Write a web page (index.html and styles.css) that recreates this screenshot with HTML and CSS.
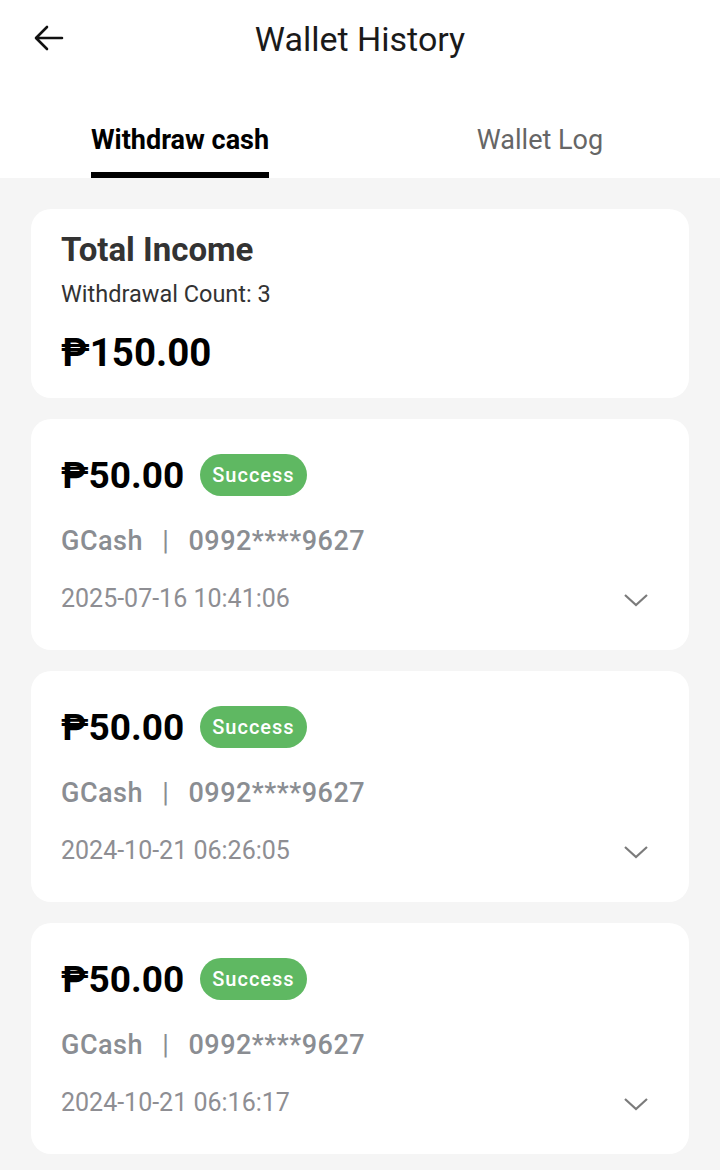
FILE: index.html
```html
<!DOCTYPE html>
<html lang="en">
<head>
    <meta charset="UTF-8">
    <meta name="viewport" content="width=device-width, initial-scale=1.0">
    <title>Wallet History</title>
    <link rel="stylesheet" href="styles.css">
</head>
<body>
    <div class="header">
        <div class="topbar">
            <span class="back">
                <svg width="30" height="26" viewBox="0 0 30 26"><path d="M28 13H3M13 2L2 13l11 11" fill="none" stroke="#111" stroke-width="2.6" stroke-linecap="round" stroke-linejoin="round"/></svg>
            </span>
            <h1>Wallet History</h1>
        </div>
        <div class="tabs">
            <div class="tab active"><span>Withdraw cash</span></div>
            <div class="tab"><span>Wallet Log</span></div>
        </div>
    </div>

    <div class="content">
        <div class="card summary">
            <h2>Total Income</h2>
            <p class="count">Withdrawal Count: 3</p>
            <p class="total">₱150.00</p>
        </div>

        <div class="card record">
            <div class="amount-row">
                <span class="amount">₱50.00</span>
                <span class="badge">Success</span>
            </div>
            <p class="account">GCash <span class="sep">|</span> 0992****9627</p>
            <div class="date-row">
                <span class="date">2025-07-16 10:41:06</span>
                <svg class="chev" width="26" height="16" viewBox="0 0 26 16"><path d="M2 3l11 10L24 3" fill="none" stroke="#7b7b7b" stroke-width="2.2"/></svg>
            </div>
        </div>

        <div class="card record">
            <div class="amount-row">
                <span class="amount">₱50.00</span>
                <span class="badge">Success</span>
            </div>
            <p class="account">GCash <span class="sep">|</span> 0992****9627</p>
            <div class="date-row">
                <span class="date">2024-10-21 06:26:05</span>
                <svg class="chev" width="26" height="16" viewBox="0 0 26 16"><path d="M2 3l11 10L24 3" fill="none" stroke="#7b7b7b" stroke-width="2.2"/></svg>
            </div>
        </div>

        <div class="card record">
            <div class="amount-row">
                <span class="amount">₱50.00</span>
                <span class="badge">Success</span>
            </div>
            <p class="account">GCash <span class="sep">|</span> 0992****9627</p>
            <div class="date-row">
                <span class="date">2024-10-21 06:16:17</span>
                <svg class="chev" width="26" height="16" viewBox="0 0 26 16"><path d="M2 3l11 10L24 3" fill="none" stroke="#7b7b7b" stroke-width="2.2"/></svg>
            </div>
        </div>
    </div>
</body>
</html>
```

FILE: styles.css
```css
body {
    font-family: Roboto, "Liberation Sans", sans-serif;
    margin: 0;
    background-color: #f5f5f5;
    color: #111;
}
.header {
    background: white;
}
.topbar {
    height: 80px;
    display: flex;
    align-items: center;
    justify-content: center;
    position: relative;
}
.back {
    position: absolute;
    left: 34px;
    top: 25px;
    display: flex;
}
h1 {
    margin: 0;
    font-size: 34px;
    font-weight: 400;
    color: #1a1a1a;
    padding-bottom: 2px;
}
.tabs {
    display: flex;
    height: 98px;
}
.tab {
    flex: 1;
    display: flex;
    justify-content: center;
}
.tab span {
    font-size: 27px;
    color: #666;
    padding-top: 44px;
    height: 48px;
}
.tab.active span {
    color: #000;
    font-weight: 700;
    border-bottom: 6px solid #000;
}
.content {
    padding: 31px 31px 14px;
    display: flex;
    flex-direction: column;
    gap: 21px;
}
.card {
    background: white;
    border-radius: 20px;
    padding: 0 30px;
}
.summary {
    height: 189px;
    padding-top: 21px;
    box-sizing: border-box;
}
.summary h2 {
    margin: 0;
    font-size: 33px;
    font-weight: 700;
    color: #333;
    line-height: 40px;
}
.count {
    margin: 9px 0 0;
    font-size: 23.5px;
    color: #333;
    line-height: 30px;
}
.total {
    margin: 20px 0 0;
    font-size: 38.5px;
    font-weight: 700;
    color: #000;
    line-height: 48px;
}
.record {
    height: 231px;
    padding-top: 35px;
    box-sizing: border-box;
}
.amount-row {
    display: flex;
    align-items: center;
    gap: 16px;
    height: 42px;
}
.amount {
    font-size: 37px;
    font-weight: 700;
    color: #000;
}
.badge {
    background: #5fb862;
    color: white;
    font-size: 20px;
    font-weight: 500;
    letter-spacing: 1px;
    height: 42px;
    line-height: 42px;
    padding: 0 12px;
    border-radius: 21px;
}
.account {
    margin: 28px 0 0;
    font-size: 27px;
    font-weight: 500;
    color: #8a8d92;
    line-height: 34px;
    letter-spacing: 0.5px;
}
.sep {
    margin: 0 12px;
    font-weight: 400;
}
.date-row {
    display: flex;
    align-items: center;
    justify-content: space-between;
    margin-top: 24px;
    height: 32px;
    padding-right: 10px;
}
.date {
    font-size: 25px;
    color: #8e8e93;
}
.chev {
    margin-top: 4px;
}
```
